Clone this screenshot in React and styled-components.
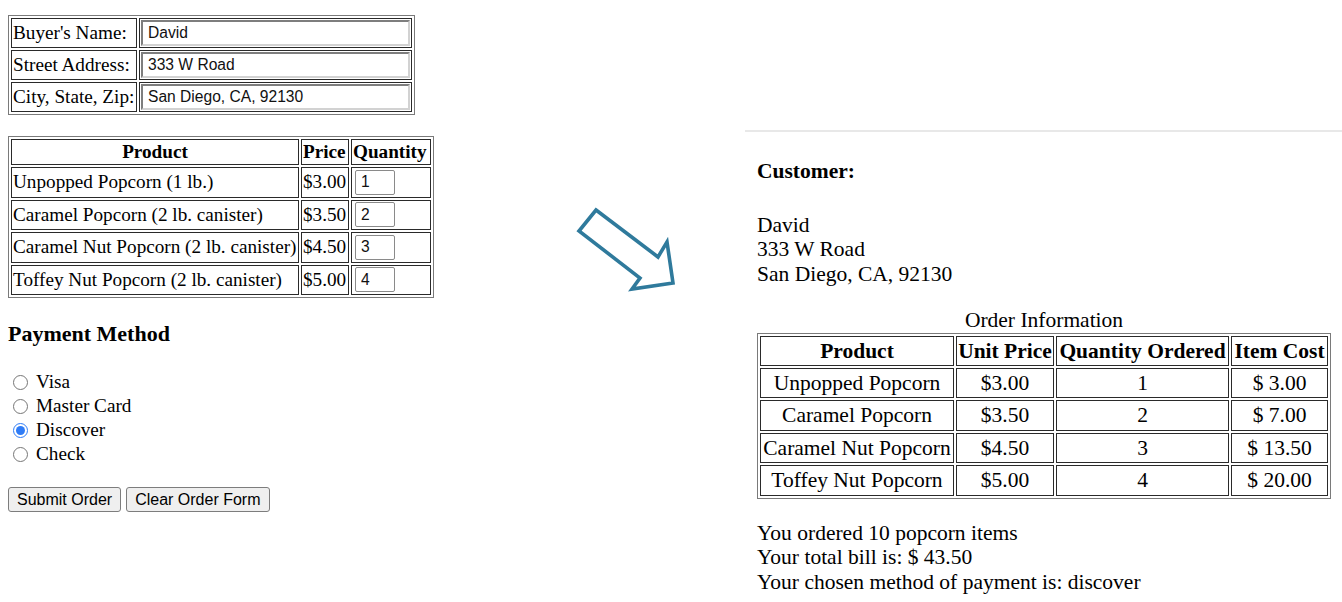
import React from "react";
import styled, { createGlobalStyle } from "styled-components";

const Global = createGlobalStyle`
  html, body { margin: 0; padding: 0; background: #fff; }
  body { font-family: "Liberation Serif", "Times New Roman", serif; color: #000; }
`;

const Page = styled.div`
  display: flex;
  width: 1342px;
  height: 602px;
  overflow: hidden;
  background: #fff;
`;

const LeftCol = styled.div`
  width: 552px;
  padding: 15px 0 0 8px;
  font-size: 19.2px;
  display: flex;
  flex-direction: column;
  align-items: flex-start;
`;

const ArrowCol = styled.div`
  width: 185px;
  padding: 206px 0 0 16px;
  box-sizing: border-box;
`;

const RightCol = styled.div`
  flex: 1;
  padding-top: 130px;
`;

const Divider = styled.div`
  border-top: 2px solid #e8e8e8;
  padding: 27px 0 0 12px;
  font-size: 21.5px;
  line-height: 24.5px;
`;

const FormTable = styled.table`
  border-collapse: separate;
  border-spacing: 2px;
  border: 1px solid #7a7a7a;
  margin-bottom: ${(p) => p.$mb || 0}px;
`;

const Cell = styled.td`
  box-sizing: border-box;
  border: 1px solid #2a2a2a;
  padding: 0 1px;
  height: ${(p) => p.$h || 30}px;
  width: ${(p) => (p.$w ? p.$w + "px" : "auto")};
  white-space: nowrap;
  line-height: 22px;
  text-align: ${(p) => p.$align || "left"};
  font-weight: ${(p) => (p.$bold ? 700 : 400)};
  vertical-align: middle;
`;

const TextInput = styled.input`
  box-sizing: border-box;
  display: block;
  width: ${(p) => p.$w}px;
  height: ${(p) => p.$h}px;
  margin: 0 0 0 ${(p) => p.$ml || 0}px;
  padding: 0 5px;
  border-style: ${(p) => (p.$single ? "solid" : "inset")};
  border-width: ${(p) => (p.$single ? 1 : 2)}px;
  border-color: ${(p) => (p.$single ? "#8a8a8a" : "#d2d2d2")};
  border-radius: ${(p) => (p.$single ? 2 : 0)}px;
  font-family: "Liberation Sans", Arial, sans-serif;
  font-size: 15.6px;
  color: #111;
  background: #fff;
  outline: none;
`;

const Heading = styled.div`
  font-weight: 700;
  font-size: 22px;
  line-height: 26px;
  margin: 23px 0 23px 0;
`;

const RadioList = styled.div`
  display: flex;
  flex-direction: column;
  margin-bottom: 21px;
`;

const RadioRow = styled.label`
  display: flex;
  align-items: center;
  height: 24px;
  line-height: 24px;
`;

const Radio = styled.input`
  width: 15px;
  height: 15px;
  margin: 0 8px 0 5px;
  accent-color: #2f7cf6;
`;

const ButtonRow = styled.div`
  display: flex;
  gap: 5px;
`;

const Button = styled.button`
  height: 25px;
  padding: 0 8px;
  font-family: "Liberation Sans", Arial, sans-serif;
  font-size: 16px;
  color: #000;
  background: #efefef;
  border: 1px solid #7d7d7d;
  border-radius: 3px;
`;

const Bold = styled.div`
  font-weight: 700;
  margin-bottom: 29px;
`;

const Line = styled.div``;

const Address = styled.div`
  margin-bottom: 22px;
`;

const OrderTable = styled.table`
  border-collapse: separate;
  border-spacing: 2px;
  border: 1px solid #7a7a7a;
  margin-bottom: 22px;
`;

const Caption = styled.caption`
  line-height: 24.5px;
`;

const OCell = styled.td`
  box-sizing: border-box;
  border: 1px solid #2a2a2a;
  padding: 0 1px;
  height: ${(p) => p.$h || 30.5}px;
  width: ${(p) => p.$w}px;
  white-space: nowrap;
  text-align: center;
  font-weight: ${(p) => (p.$bold ? 700 : 400)};
  line-height: 24px;
  vertical-align: middle;
`;

const Arrow = () => (
  <svg width="104" height="90" viewBox="0 0 104 90">
    <polygon
      points="20,4 82,51 91,36 97,77 56,83 64,72 3,25"
      fill="#fff"
      stroke="#2f7a9c"
      strokeWidth="3.6"
      strokeLinejoin="miter"
    />
  </svg>
);

const products = [
  ["Unpopped Popcorn (1 lb.)", "Unpopped Popcorn", 3, 1],
  ["Caramel Popcorn (2 lb. canister)", "Caramel Popcorn", 3.5, 2],
  ["Caramel Nut Popcorn (2 lb. canister)", "Caramel Nut Popcorn", 4.5, 3],
  ["Toffey Nut Popcorn (2 lb. canister)", "Toffey Nut Popcorn", 5, 4],
];

const methods = [
  ["Visa", false],
  ["Master Card", false],
  ["Discover", true],
  ["Check", false],
];

export default function App() {
  const total = products.reduce((s, p) => s + p[2] * p[3], 0);
  const count = products.reduce((s, p) => s + p[3], 0);
  return (
    <Page>
      <Global />
      <LeftCol>
        <FormTable $mb={21}>
          <tbody>
            {[
              ["Buyer's Name:", "David"],
              ["Street Address:", "333 W Road"],
              ["City, State, Zip:", "San Diego, CA, 92130"],
            ].map(([l, v]) => (
              <tr key={l}>
                <Cell $w={126}>{l}</Cell>
                <Cell $w={273}>
                  <TextInput $w={269} $h={26} defaultValue={v} />
                </Cell>
              </tr>
            ))}
          </tbody>
        </FormTable>
        <FormTable>
          <tbody>
            <tr>
              <Cell $w={288} $h={26} $bold $align="center">Product</Cell>
              <Cell $w={48} $h={26} $bold>Price</Cell>
              <Cell $w={80} $h={26} $bold>Quantity</Cell>
            </tr>
            {products.map((p) => (
              <tr key={p[0]}>
                <Cell $h={30.5}>{p[0]}</Cell>
                <Cell $h={30.5}>${p[2].toFixed(2)}</Cell>
                <Cell $h={30.5}>
                  <TextInput $w={40} $h={25} $ml={2} $single defaultValue={p[3]} />
                </Cell>
              </tr>
            ))}
          </tbody>
        </FormTable>
        <Heading>Payment Method</Heading>
        <RadioList>
          {methods.map(([m, c]) => (
            <RadioRow key={m}>
              <Radio type="radio" name="pay" defaultChecked={c} />
              {m}
            </RadioRow>
          ))}
        </RadioList>
        <ButtonRow>
          <Button>Submit Order</Button>
          <Button>Clear Order Form</Button>
        </ButtonRow>
      </LeftCol>
      <ArrowCol>
        <Arrow />
      </ArrowCol>
      <RightCol>
        <Divider>
          <Bold>Customer:</Bold>
          <Address>
            <Line>David</Line>
            <Line>333 W Road</Line>
            <Line>San Diego, CA, 92130</Line>
          </Address>
          <OrderTable>
            <Caption>Order Information</Caption>
            <tbody>
              <tr>
                <OCell $w={194} $h={30} $bold>Product</OCell>
                <OCell $w={98} $h={30} $bold>Unit Price</OCell>
                <OCell $w={173} $h={30} $bold>Quantity Ordered</OCell>
                <OCell $w={97} $h={30} $bold>Item Cost</OCell>
              </tr>
              {products.map((p) => (
                <tr key={p[1]}>
                  <OCell>{p[1]}</OCell>
                  <OCell>${p[2].toFixed(2)}</OCell>
                  <OCell>{p[3]}</OCell>
                  <OCell>$ {(p[2] * p[3]).toFixed(2)}</OCell>
                </tr>
              ))}
            </tbody>
          </OrderTable>
          <Line>You ordered {count} popcorn items</Line>
          <Line>Your total bill is: $ {total.toFixed(2)}</Line>
          <Line>Your chosen method of payment is: discover</Line>
        </Divider>
      </RightCol>
    </Page>
  );
}
